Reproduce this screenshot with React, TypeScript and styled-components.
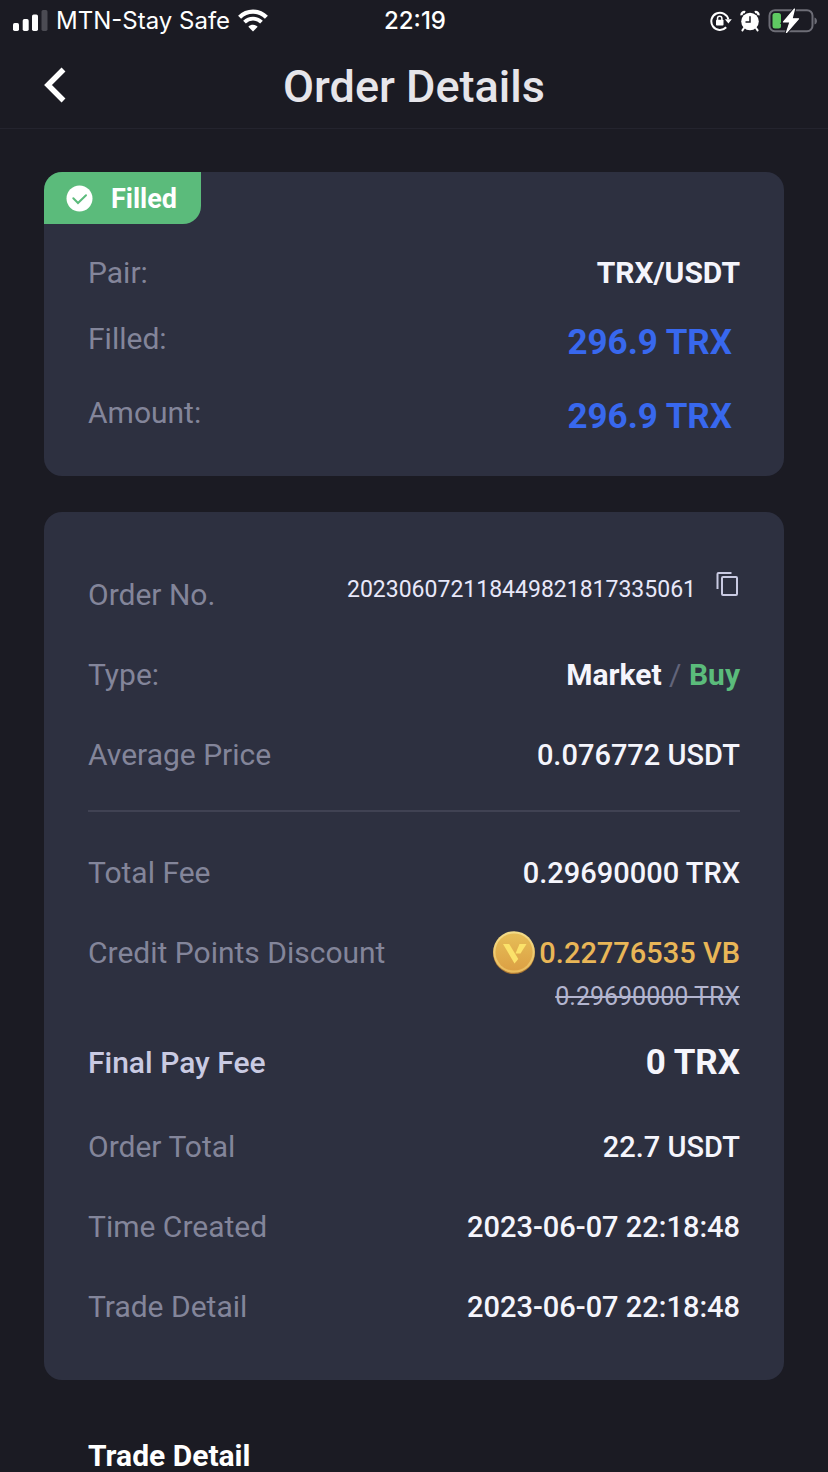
import React from "react";
import styled, { createGlobalStyle } from "styled-components";

const GlobalStyle = createGlobalStyle`
  * { box-sizing: border-box; }
  body {
    margin: 0;
    background: #1b1b23;
    color: #ffffff;
    font-family: Roboto, "Liberation Sans", sans-serif;
  }
`;

const StatusBar = styled.div`
  display: grid;
  grid-template-columns: 1fr auto 1fr;
  align-items: center;
  height: 42px;
  padding: 0 10px 0 12px;
  font-family: Inter, "Liberation Sans", sans-serif;
  font-size: 24px;
  line-height: 28px;
`;

const StatusGroup = styled.div<{ $end?: boolean }>`
  display: flex;
  align-items: center;
  gap: 8px;
  justify-content: ${(p) => (p.$end ? "flex-end" : "flex-start")};
  white-space: nowrap;
`;

const Clock = styled.time`
  font-weight: 500;
`;

const Header = styled.header`
  display: grid;
  grid-template-columns: 62px 1fr 62px;
  align-items: center;
  height: 87px;
  padding: 0 24px;
  border-bottom: 1px solid #24242e;
`;

const BackButton = styled.button`
  display: flex;
  justify-content: center;
  padding: 0;
  border: 0;
  background: none;
  color: inherit;
  cursor: pointer;
`;

const Title = styled.h1`
  margin: 0;
  padding-top: 4px;
  text-align: center;
  font-size: 45px;
  line-height: 52px;
  font-weight: 500;
  color: #e6e5ea;
`;

const Content = styled.main`
  display: flex;
  flex-direction: column;
  gap: 36px;
  padding: 43px 44px 0;
`;

const Card = styled.section`
  overflow: hidden;
  border-radius: 18px;
  background: #2d3040;
`;

const Badge = styled.div`
  display: inline-flex;
  align-items: center;
  gap: 18px;
  height: 52px;
  padding: 2px 24px 0 22px;
  border-bottom-right-radius: 18px;
  background: #5bbb7b;
  font-size: 27px;
  line-height: 32px;
  font-weight: 700;
  vertical-align: top;
`;

const SummaryList = styled.dl`
  display: flex;
  flex-direction: column;
  gap: 26px;
  margin: 0;
  padding: 29px 44px 35px;
`;

const SummaryRow = styled.div`
  display: flex;
  justify-content: space-between;
  align-items: flex-start;
`;

const DetailList = styled.dl`
  margin: 0;
  padding: 43px 44px 33px;
`;

const DetailRow = styled.div`
  display: flex;
  justify-content: space-between;
  align-items: center;
  min-height: 80px;
`;

const DiscountRow = styled(DetailRow)`
  align-items: flex-start;
  min-height: 110px;
  padding-top: 20px;
`;

const FeeRow = styled(DetailRow)`
  margin-bottom: 4px;
`;

const Label = styled.dt<{ $strong?: boolean }>`
  font-size: 30px;
  line-height: 40px;
  font-weight: ${(p) => (p.$strong ? 500 : 400)};
  color: ${(p) => (p.$strong ? "#c9cae2" : "#83859a")};
`;

const Value = styled.dd<{ $bold?: boolean }>`
  margin: 0;
  font-size: ${(p) => (p.$bold ? "30px" : "29px")};
  line-height: 40px;
  font-weight: ${(p) => (p.$bold ? 700 : 500)};
  color: #f5f5fc;
  text-align: right;
`;

const Quantity = styled(Value)`
  padding-right: 8px;
  font-size: 35px;
  line-height: 48px;
  font-weight: 700;
  color: #3868ee;
`;

const FinalFee = styled(Value)`
  font-size: 35px;
  font-weight: 700;
`;

const OrderNumber = styled(Value)`
  display: flex;
  align-items: center;
  gap: 20px;
  padding-bottom: 10px;
  font-size: 23px;
  font-weight: 400;
  color: #e8e8fa;
`;

const CopyButton = styled.button`
  display: flex;
  padding: 0 0 12px;
  border: 0;
  background: none;
  color: #c9cae2;
  cursor: pointer;
`;

const Slash = styled.span`
  font-weight: 400;
  color: #62647a;
`;

const Side = styled.span`
  color: #5bbb7b;
`;

const Points = styled.div`
  display: flex;
  align-items: center;
  justify-content: flex-end;
  gap: 4px;
  height: 40px;
  color: #e9b657;
`;

const OldFee = styled.s`
  display: block;
  margin-top: 8px;
  font-size: 25px;
  line-height: 32px;
  font-weight: 400;
  color: #b3b5cf;
`;

const Divider = styled.div`
  height: 2px;
  margin: 15px 0 21px;
  background: #404253;
`;

const TradeHeading = styled.h2`
  margin: 24px 44px 0;
  font-size: 30px;
  line-height: 32px;
  font-weight: 700;
`;

const SignalIcon = () => (
  <svg width="36" height="24" viewBox="0 0 36 24" fill="#fff" aria-hidden="true">
    <rect x="1" y="14" width="6" height="8" rx="1.700" />
    <rect x="10.700" y="10" width="6" height="12" rx="1.700" />
    <rect x="20" y="5.500" width="6" height="16.500" rx="1.700" />
    <rect x="29.500" y="1" width="6" height="21" rx="1.700" fill="#4b4b53" />
  </svg>
);

const WifiIcon = () => (
  <svg width="30" height="24" viewBox="0 0 30 24" fill="none" stroke="#fff" aria-hidden="true">
    <path d="M1.600 8.300C9 .8 21 .8 28.400 8.300" strokeWidth="4.200" />
    <path d="M6.500 13.200C11.200 8.500 18.800 8.500 23.500 13.200" strokeWidth="3.800" />
    <path d="M15 22.500L10.300 17.800C12.900 15.200 17.100 15.200 19.700 17.800Z" fill="#fff" stroke="none" />
  </svg>
);

const RotationLockIcon = () => (
  <svg width="22" height="20" viewBox="0 0 22 20" fill="none" aria-hidden="true">
    <path d="M16.200 16.200A8.600 8.600 0 1 1 18.300 8.300" stroke="#fff" strokeWidth="2" />
    <path d="M14.900 8.200H21.800L18.400 12.600Z" fill="#fff" />
    <rect x="6" y="8.800" width="7.500" height="5.800" rx=".8" fill="#fff" />
    <path d="M7.500 9V7.400a2.200 2.200 0 0 1 4.400 0V9" stroke="#fff" strokeWidth="1.500" />
  </svg>
);

const AlarmIcon = () => (
  <svg width="20" height="22" viewBox="0 0 20 22" fill="none" aria-hidden="true">
    <circle cx="10" cy="11.500" r="8.800" fill="#fff" />
    <path d="M1.600 5.200C1.200 3 3.200 1.500 5.200 2.200M18.400 5.200C18.800 3 16.800 1.500 14.800 2.200" stroke="#fff" strokeWidth="2.400" />
    <path d="M4 18L2.400 20.400M16 18L17.600 20.400" stroke="#fff" strokeWidth="2" strokeLinecap="round" />
    <path d="M10 6.300V12H5.500" stroke="#1b1b23" strokeWidth="1.500" />
  </svg>
);

const BatteryIcon = () => (
  <svg width="50" height="28" viewBox="0 0 50 28" fill="none" aria-hidden="true">
    <rect x="1.500" y="3.200" width="43" height="21" rx="5.500" stroke="#6d6d76" strokeWidth="2" />
    <path d="M46.500 10.500C49.800 11.500 49.800 16.500 46.500 17.500Z" fill="#6d6d76" />
    <rect x="4.500" y="6" width="8.500" height="15.500" rx="2.500" fill="#5fca62" />
    <path d="M26.500 2L15.500 15H22L18.500 25.500L30.500 11.800H24Z" fill="#fff" stroke="#1b1b23" strokeWidth="3.400" />
    <path d="M26.500 2L15.500 15H22L18.500 25.500L30.500 11.800H24Z" fill="#fff" stroke="#fff" strokeWidth="1.200" strokeLinejoin="round" />
  </svg>
);

const BackIcon = () => (
  <svg width="24" height="36" viewBox="0 0 24 36" fill="none" aria-hidden="true">
    <path d="M20.500 2.500L5 18L20.500 33.500" stroke="#fff" strokeWidth="5.500" />
  </svg>
);

const CheckIcon = () => (
  <svg width="27" height="29" viewBox="0 0 27 29" fill="none" aria-hidden="true">
    <circle cx="13.500" cy="13.500" r="13" fill="#fff" />
    <path d="M7.300 13.300L12 18L20 10.200" stroke="#5bbb7b" strokeWidth="2" strokeLinecap="round" />
  </svg>
);

const CopyIcon = () => (
  <svg width="24" height="26" viewBox="0 0 24 26" fill="none" stroke="currentColor" strokeWidth="2" aria-hidden="true">
    <path d="M1.500 18V3Q1.500 2 2.500 2H15.500" />
    <rect x="6" y="6" width="15" height="18" rx="1" />
  </svg>
);

const CoinIcon = () => (
  <svg width="42" height="44" viewBox="0 0 42 44" aria-hidden="true">
    <defs>
      <linearGradient id="coinFace" x1="0" y1="0" x2="0" y2="1">
        <stop offset="0" stopColor="#e6be57" />
        <stop offset="1" stopColor="#dca044" />
      </linearGradient>
      <linearGradient id="coinRim" x1="0" y1="0" x2="0" y2="1">
        <stop offset="0" stopColor="#f3dd8a" />
        <stop offset="1" stopColor="#e9bb5c" />
      </linearGradient>
    </defs>
    <circle cx="21" cy="22" r="21" fill="#a77332" />
    <circle cx="21" cy="21" r="20.800" fill="url(#coinRim)" />
    <circle cx="21" cy="21" r="18.600" fill="url(#coinFace)" />
    <path d="M10 13H16.200L25.300 28L21.500 32.500Z" fill="#fbe26a" />
    <path d="M26.500 13H33.500L27.500 22.500L22.500 22.500Z" fill="#fbe26a" />
  </svg>
);

export default function App() {
  return (
    <>
      <GlobalStyle />
      <StatusBar>
        <StatusGroup>
          <SignalIcon />
          <span>MTN-Stay Safe</span>
          <WifiIcon />
        </StatusGroup>
        <Clock>22:19</Clock>
        <StatusGroup $end>
          <RotationLockIcon />
          <AlarmIcon />
          <BatteryIcon />
        </StatusGroup>
      </StatusBar>
      <Header>
        <BackButton type="button" aria-label="Back">
          <BackIcon />
        </BackButton>
        <Title>Order Details</Title>
      </Header>
      <Content>
        <Card>
          <Badge>
            <CheckIcon />
            Filled
          </Badge>
          <SummaryList>
            <SummaryRow>
              <Label>Pair:</Label>
              <Value $bold>TRX/USDT</Value>
            </SummaryRow>
            <SummaryRow>
              <Label>Filled:</Label>
              <Quantity>296.9 TRX</Quantity>
            </SummaryRow>
            <SummaryRow>
              <Label>Amount:</Label>
              <Quantity>296.9 TRX</Quantity>
            </SummaryRow>
          </SummaryList>
        </Card>
        <Card>
          <DetailList>
            <DetailRow>
              <Label>Order No.</Label>
              <OrderNumber>
                202306072118449821817335061
                <CopyButton type="button" aria-label="Copy order number">
                  <CopyIcon />
                </CopyButton>
              </OrderNumber>
            </DetailRow>
            <DetailRow>
              <Label>Type:</Label>
              <Value $bold>
                Market <Slash>/</Slash> <Side>Buy</Side>
              </Value>
            </DetailRow>
            <DetailRow>
              <Label>Average Price</Label>
              <Value>0.076772 USDT</Value>
            </DetailRow>
            <Divider />
            <DetailRow>
              <Label>Total Fee</Label>
              <Value>0.29690000 TRX</Value>
            </DetailRow>
            <DiscountRow>
              <Label>Credit Points Discount</Label>
              <Value>
                <Points>
                  <CoinIcon />
                  0.22776535 VB
                </Points>
                <OldFee>0.29690000 TRX</OldFee>
              </Value>
            </DiscountRow>
            <FeeRow>
              <Label $strong>Final Pay Fee</Label>
              <FinalFee>0 TRX</FinalFee>
            </FeeRow>
            <DetailRow>
              <Label>Order Total</Label>
              <Value>22.7 USDT</Value>
            </DetailRow>
            <DetailRow>
              <Label>Time Created</Label>
              <Value>2023-06-07 22:18:48</Value>
            </DetailRow>
            <DetailRow>
              <Label>Trade Detail</Label>
              <Value>2023-06-07 22:18:48</Value>
            </DetailRow>
          </DetailList>
        </Card>
        <TradeHeading>Trade Detail</TradeHeading>
      </Content>
    </>
  );
}
